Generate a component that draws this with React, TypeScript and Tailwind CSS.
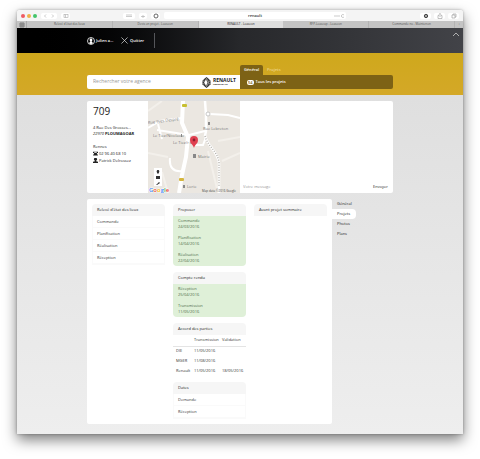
import React from "react";

type Step = { label: string; date?: string };

function Panel({ title, children }: { title: string; children?: React.ReactNode }) {
  return (
    <section className="rounded-sm bg-white">
      <h2 className="flex h-3 items-center rounded-t-sm bg-[#f6f6f6] px-[5px] whitespace-nowrap text-[#222]">{title}</h2>
      {children}
    </section>
  );
}

function PlainSteps({ steps }: { steps: Step[] }) {
  return (
    <ul className="border-x border-b border-[#fafafa]">
      {steps.map((s) => (
        <li key={s.label} className="flex h-3 items-center border-b border-[#fafafa] px-1">{s.label}</li>
      ))}
    </ul>
  );
}

function DoneSteps({ steps }: { steps: Step[] }) {
  return (
    <ul className="flex flex-col gap-[5px] rounded-b-sm bg-[#dff0d8] px-[5px] pt-0.5 pb-0.5 text-[#4c6b4a]">
      {steps.map((s) => (
        <li key={s.label} className="leading-[6px]">
          <div>{s.label}</div>
          <div>{s.date}</div>
        </li>
      ))}
    </ul>
  );
}

function Toolbar() {
  const chip = "flex h-[6px] items-center justify-center rounded-[2px] bg-white text-[#777]";
  return (
    <div className="relative flex h-[11px] items-center bg-[#f4f4f4] px-1">
      <div className="flex gap-0.5">
        <span className="size-1 rounded-full bg-[#ee5b62]" />
        <span className="size-1 rounded-full bg-[#efb34a]" />
        <span className="size-1 rounded-full bg-[#43c46a]" />
      </div>
      <button aria-label="Précédent" className={chip + " ml-1 w-4"}>
        <svg viewBox="0 0 16 6" className="h-[6px] w-4" fill="none" stroke="#aaa" strokeWidth=".6"><path d="M5 1.5 3.5 3 5 4.500M11 1.500 12.500 3 11 4.500" /></svg>
      </button>
      <button aria-label="Barre latérale" className={chip + " ml-1 w-[9px]"}>
        <svg viewBox="0 0 6 6" className="size-[6px]" fill="none" stroke="#aaa" strokeWidth=".6"><rect x="1" y="1.500" width="4" height="3" /><path d="M2.500 1.500v3" /></svg>
      </button>
      <div className="absolute left-[106px] flex gap-1">
        <button aria-label="Lecture" className={chip + " w-3"}>
          <svg viewBox="0 0 12 6" className="h-[6px] w-3" fill="none" stroke="#aaa" strokeWidth=".6"><path d="M3 2h6M3 3.500h6" /></svg>
        </button>
        <button aria-label="Extension" className={chip + " w-2"}>
          <svg viewBox="0 0 6 6" className="size-[6px]" fill="none" stroke="#aaa" strokeWidth=".6"><path d="M1 3.500h4M3 2v3" /></svg>
        </button>
        <button aria-label="Bloqueur" className={chip + " w-[9px]"}>
          <svg viewBox="0 0 6 6" className="size-[6px]" fill="none" stroke="#555" strokeWidth=".9"><circle cx="3" cy="3" r="2" /></svg>
        </button>
      </div>
      <input aria-label="Adresse" defaultValue="renault" className="absolute right-[117px] left-[147px] h-[7px] rounded-[2px] bg-white text-center text-[4px] font-semibold text-[#333]" />
      <svg viewBox="0 0 12 6" className="absolute right-[118px] h-[6px] w-3" fill="none" stroke="#aaa" strokeWidth=".6"><path d="M1 3h6" /><path d="M11 2a1.500 1.500 0 1 0 0 2" /></svg>
      <div className="ml-auto flex gap-[3px]">
        <button aria-label="Téléchargements" className={chip + " w-[11px]"}>
          <svg viewBox="0 0 6 6" className="size-[6px]" fill="none" stroke="#444" strokeWidth="1"><circle cx="3" cy="3" r="1.700" /><path d="M3 2v2" /></svg>
        </button>
        <button aria-label="Partager" className={chip + " w-[11px]"}>
          <svg viewBox="0 0 6 6" className="size-[6px]" fill="none" stroke="#999" strokeWidth=".6"><path d="M2 2.500H1V5.500H5V2.500H4M3 4V.5M2 1.500 3 .5 4 1.500" /></svg>
        </button>
        <button aria-label="Onglets" className={chip + " w-[11px]"}>
          <svg viewBox="0 0 6 6" className="size-[6px]" fill="none" stroke="#999" strokeWidth=".6"><path d="M1 2h3v3H1zM2 2V1h3v3H4" /></svg>
        </button>
      </div>
    </div>
  );
}

function BrowserTabs() {
  const tab = "flex flex-1 items-center justify-center border-r border-[#b4b4b4]";
  return (
    <div className="flex h-[7px] bg-[#c4c4c4] text-[3px] whitespace-nowrap text-[#555]">
      <div className="flex w-[10px] items-center justify-center border-r border-[#aaa]">
        <svg viewBox="0 0 6 6" className="size-[6px]" fill="none" stroke="#666" strokeWidth=".7"><path d="M1 1h4v4H1zM1 3h4M3 1v4" /></svg>
      </div>
      <div className={tab}>Relevé d'état des lieux</div>
      <div className={tab}>Devis en projet - Leaseon</div>
      <div className="flex flex-1 items-center justify-center bg-[#dedede] text-[#222]">RENAULT - Leaseon</div>
      <div className={tab}>RFP-Leaseup - Leaseon</div>
      <div className={tab}>Commande no - Maintenon</div>
      <button aria-label="Nouvel onglet" className="flex w-2 items-center justify-center">+</button>
    </div>
  );
}

function TopBar() {
  return (
    <header className="flex h-[25px] items-start bg-linear-to-r from-black via-[#27282b] to-[#424348] pr-[3px] pl-[70px] text-[4px] font-semibold text-white">
      <div className="flex h-[25px] flex-1 items-center">
        <button className="flex w-[34px] items-center gap-px">
          <svg viewBox="0 0 16 16" className="size-2">
            <circle cx="8" cy="8" r="7" fill="none" stroke="#fff" strokeWidth="1.600" />
            <path d="M8 3c-2 0-2.800 1.400-2.600 3.300.1 1.200.6 2 1.200 2.600v1.200L3.500 12A6.500 6.500 0 0 0 12.500 12L9.400 10.100V8.900c.6-.6 1.100-1.400 1.200-2.600C10.800 4.400 10 3 8 3z" fill="#fff" />
          </svg>
          Julien a...
        </button>
        <button className="flex w-[33px] items-center gap-0.5">
          <svg viewBox="0 0 8 8" className="size-[7px]" stroke="#ddd" strokeWidth=".8"><path d="M.5.5 7.500 7.500M7.500.5.5 7.500" /></svg>
          Quitter
        </button>
        <span className="h-[15px] w-px bg-[#55565a]" />
      </div>
      <button aria-label="Replier" className="mt-1">
        <svg viewBox="0 0 8 5" className="h-[5px] w-2" fill="none" stroke="#bbb" strokeWidth=".9"><path d="m1 4 3-3 3 3" /></svg>
      </button>
    </header>
  );
}

function RenaultLogo() {
  return (
    <div className="flex items-center gap-0.5 pr-1">
      <svg viewBox="0 0 20 24" className="h-[11px] w-[9px]">
        <path d="M6 3 10 0l4 3 5 5v8l-5 5-4 3-4-3-5-5V8z" fill="#333" />
        <path d="M10 2 15 12 10 22 5 12z" fill="#fff" />
        <path d="M10 2 15 12 10 22 9 19 12 12 9 6z" fill="#666" />
        <path d="M1 9h5M14 9h5M1 15h5M14 15h5" stroke="#fff" strokeWidth="1" />
      </svg>
      <div className="font-bold text-[#222]">
        <div className="text-[5px] leading-[5px]">RENAULT</div>
        <div className="text-[2px] leading-[3px]">Passion for life</div>
      </div>
    </div>
  );
}

function SearchBand() {
  return (
    <div className="flex h-[42px] items-start bg-linear-to-b from-[#cfa81c] to-[#d4a827] px-[70px] pt-3 text-[4px]">
      <label className="mt-[10px] flex h-[14px] flex-1 items-center rounded-l-xs bg-white">
        <input aria-label="Recherche" placeholder="Rechercher votre agence" className="w-0 flex-1 pl-[6px] text-[5px] outline-none placeholder:text-[#999]" />
        <RenaultLogo />
      </label>
      <div className="flex-1">
        <div className="flex h-[10px] font-semibold">
          <button className="w-[23px] rounded-t-xs bg-[#7d6215] text-white">Général</button>
          <button className="px-1 text-[#edd48a]">Projets</button>
        </div>
        <div className="flex h-[14px] items-center gap-0.5 rounded-r-xs bg-[#7d6215] pl-[7px] font-semibold text-white">
          <span className="rounded-xs bg-white px-px leading-[5px] text-[#7d6215]">54</span>
          Tous les projets
        </div>
      </div>
    </div>
  );
}

function LocationMap() {
  return (
    <svg viewBox="0 0 92 92" className="size-[92px] shrink-0 bg-[#ebe7e1] font-['Open_Sans',sans-serif]">
      <path d="M70 40 92 36M74 60 92 52M0 52 20 56M14 71 20 92M60 50 70 92M0 10 14 0" fill="none" stroke="#f3f0eb" strokeWidth="2" />
      <path d="M0 27 12 20 34 17M92 17 80 14 62 13M57 30 41 34 9 29M10 23 14 38M46 44 55 44 58 36M22 57c-1 9 3 14 12 13" fill="none" stroke="#fff" strokeWidth="2" />
      <path d="M57 0 58 14 58 30 57 35C60 46 70 50 71 62L71 92" fill="none" stroke="#fff" strokeWidth="2.500" />
      <path d="M57 35C60 46 70 50 71 62L71 86" fill="none" stroke="#b5b2ad" strokeWidth="1.500" strokeDasharray="1 1.500" />
      <path d="M35 0 34 22 40 36 38 56 34 74 31 92" fill="none" stroke="#fff" strokeWidth="4" />
      <rect x="34" y="3" width="5" height="3" rx="1" fill="#c7bf30" />
      <rect x="31" y="77" width="5" height="3" rx="1" fill="#d5b63e" />
      <g fill="#777" fontSize="4">
        <text x="0" y="23" transform="rotate(-7 0 23)">Rue Yves Despré</text>
        <text x="55" y="29">Rue Lebreton</text>
        <text x="5" y="36">Le Tiez/Nicolaou</text>
        <text x="25" y="43">Le Tiez/r du</text>
        <text x="50" y="57">Mairie</text>
        <text x="39" y="87">Lorie</text>
        <text x="54" y="91" fontSize="3" fill="#444">Map data ©2016 Google</text>
      </g>
      <circle cx="60" cy="13" r="2" stroke="#bbb" fill="#fff" strokeWidth=".8" />
      <path d="M45 53v4h3v-4zM35 84h2v3h-2zM33 33h1v3h-1zM60 21h2v3h-2z" fill="#888" />
      <path d="M46 47c-1-4-4-4-4-8a4 4 0 1 1 8 0c0 4-3 4-4 8z" fill="#e04050" />
      <circle cx="46" cy="39" r="1.400" fill="#8c2030" />
      <rect x="6" y="67" width="8" height="18" fill="#fff" />
      <path d="M10 73c-2-2-1.500-4 0-4s2 2 0 4zM8 75h4v3H8zM8 84l3-3 1 1-3 2z" fill="#333" />
      <text x="1" y="91" fontSize="6" fontWeight="600" stroke="#fff" strokeWidth=".8" paintOrder="stroke">
        <tspan fill="#4285f4">G</tspan><tspan fill="#e94235">o</tspan><tspan fill="#f4b400">o</tspan><tspan fill="#4285f4">g</tspan><tspan fill="#34a853">l</tspan><tspan fill="#e94235">e</tspan>
      </text>
    </svg>
  );
}

function AgencyCard() {
  return (
    <section className="flex h-[92px] overflow-hidden rounded-xs bg-white text-[#222]">
      <div className="w-[61px] pt-1 pl-[6px] text-[4px] leading-[6px] whitespace-nowrap">
        <h1 className="text-[10px] leading-[13px]">709</h1>
        <address className="mt-[7px] not-italic">
          4 Rue Des Grosses...
          <div><i>22970</i> <b>PLOUMAGOAR</b></div>
        </address>
        <div className="mt-[6px] leading-[7px]">
          <div>Rennes</div>
          <div className="flex items-center gap-px">
            <svg viewBox="0 0 8 8" className="size-[5px]"><path d="M0 1h8v2H6V2H2v1H0zM2 3h4l2 4H0z" fill="#222" /></svg>
            02 96 40 68 10
          </div>
          <div className="flex items-center gap-px">
            <svg viewBox="0 0 8 8" className="size-[5px]"><path d="M4 0a2 2 0 0 1 1 4v1l3 1v2H0V6l3-1V4a2 2 0 0 1 1-4z" fill="#222" /></svg>
            Patrick Delrossez
          </div>
        </div>
      </div>
      <LocationMap />
      <form className="flex flex-1 items-end pr-[5px] pb-[3px] pl-[3px] text-[4px]">
        <input aria-label="Message" placeholder="Votre message" className="w-0 flex-1 outline-none placeholder:text-[#999]" />
        <button type="button">Envoyer</button>
      </form>
    </section>
  );
}

const agreements = [
  ["DIE", "11/05/2016", ""],
  ["MGER", "11/08/2016", ""],
  ["Renault", "11/05/2016", "18/05/2016"],
];

function AgreementTable() {
  return (
    <table className="w-full table-fixed text-left">
      <thead>
        <tr className="h-[11px] border-b border-[#e4e4e4]">
          <th className="w-[21px]" />
          <th className="w-[28px] font-normal">Transmission</th>
          <th className="font-normal">Validation</th>
        </tr>
      </thead>
      <tbody>
        {agreements.map(([name, sent, valid]) => (
          <tr key={name} className="h-[10px]">
            <td className="pl-[3px]">{name}</td>
            <td>{sent}</td>
            <td>{valid}</td>
          </tr>
        ))}
      </tbody>
    </table>
  );
}

function Board() {
  return (
    <main className="grid flex-1 grid-cols-3 items-start gap-2 rounded-xs bg-white px-[5px] pt-[5px] pb-[5px] text-[4px] leading-[6px] text-[#333]">
      <Panel title="Relevé d'état des lieux">
        <PlainSteps steps={[{ label: "Commande" }, { label: "Planification" }, { label: "Réalisation" }, { label: "Réception" }]} />
      </Panel>
      <div className="flex flex-col gap-[6px]">
        <Panel title="Proposer">
          <DoneSteps steps={[{ label: "Commande", date: "24/03/2016" }, { label: "Planification", date: "14/04/2016" }, { label: "Réalisation", date: "22/04/2016" }]} />
        </Panel>
        <Panel title="Compte rendu">
          <DoneSteps steps={[{ label: "Réception", date: "25/04/2016" }, { label: "Transmission", date: "11/05/2016" }]} />
        </Panel>
        <Panel title="Accord des parties">
          <AgreementTable />
        </Panel>
        <Panel title="Dates">
          <PlainSteps steps={[{ label: "Demande" }, { label: "Réception" }]} />
        </Panel>
      </div>
      <Panel title="Avant projet sommaire" />
    </main>
  );
}

function SideNav() {
  const item = "flex h-[10px] items-center px-[5px]";
  return (
    <nav className="w-[61px] text-[4px] text-[#222]">
      <a href="#general" className={item}>Général</a>
      <a href="#projets" className="flex h-[10px] w-6 items-center rounded-r-sm bg-white px-[5px]">Projets</a>
      <a href="#photos" className={item}>Photos</a>
      <a href="#plans" className={item}>Plans</a>
    </nav>
  );
}

export default function App() {
  return (
    <div className="bg-white px-[17px] pt-[10px] pb-[25px] font-['Open_Sans','Noto_Sans',sans-serif]">
      <div className="overflow-hidden rounded-t-[3px] shadow-[0_6px_14px_rgba(0,0,0,0.5),0_0_3px_rgba(0,0,0,0.3)]">
        <Toolbar />
        <BrowserTabs />
        <TopBar />
        <SearchBand />
        <div className="bg-linear-to-b from-[#dfdfdf] to-[#eeeeee] px-[70px] pt-[6px] pb-[10px]">
          <AgencyCard />
          <div className="mt-[6px] flex">
            <Board />
            <SideNav />
          </div>
        </div>
      </div>
    </div>
  );
}
